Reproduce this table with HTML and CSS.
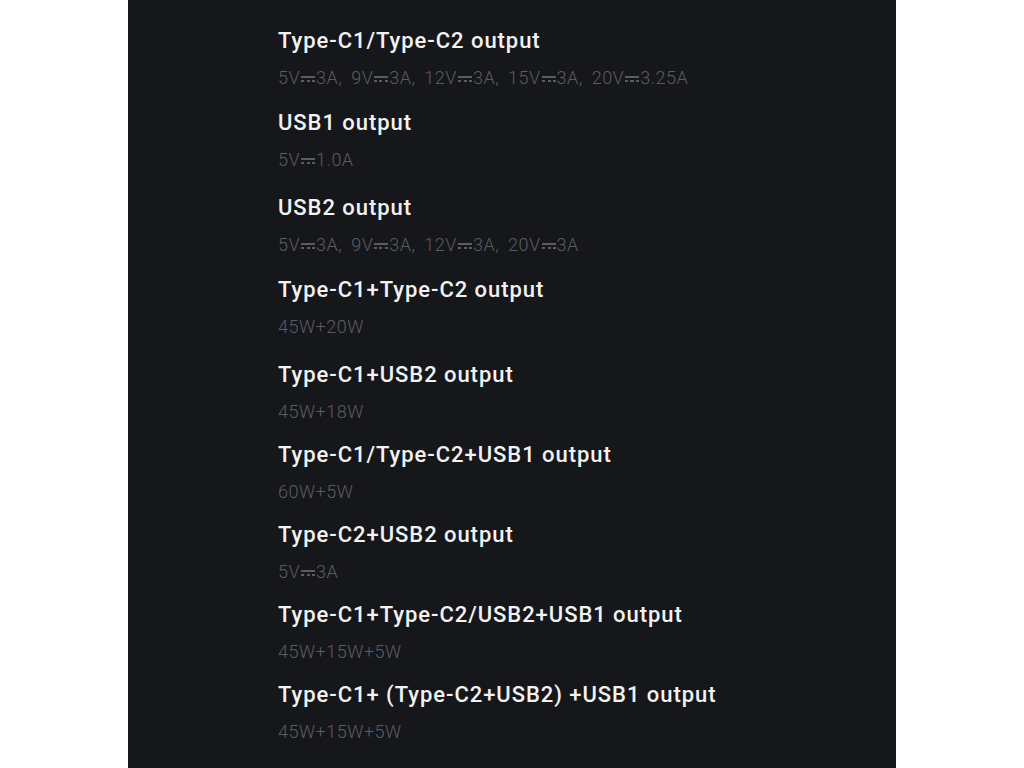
FILE: index.html
```html
<!DOCTYPE html>
<html lang="en">
<head>
<meta charset="utf-8">
<title>Output specifications</title>
<link rel="stylesheet" href="styles.css">
</head>
<body>
<main class="panel">
  <ul class="specs">
    <li class="spec spec--gap2">
      <h3 class="spec__title">Type-C1/Type-C2 output</h3>
      <p class="spec__value">5V<span class="dc"></span>3A, 9V<span class="dc"></span>3A, 12V<span class="dc"></span>3A, 15V<span class="dc"></span>3A, 20V<span class="dc"></span>3.25A</p>
    </li>
    <li class="spec spec--gap5">
      <h3 class="spec__title">USB1 output</h3>
      <p class="spec__value">5V<span class="dc"></span>1.0A</p>
    </li>
    <li class="spec spec--gap2">
      <h3 class="spec__title">USB2 output</h3>
      <p class="spec__value">5V<span class="dc"></span>3A, 9V<span class="dc"></span>3A, 12V<span class="dc"></span>3A, 20V<span class="dc"></span>3A</p>
    </li>
    <li class="spec spec--gap5">
      <h3 class="spec__title">Type-C1+Type-C2 output</h3>
      <p class="spec__value">45W+20W</p>
    </li>
    <li class="spec">
      <h3 class="spec__title">Type-C1+USB2 output</h3>
      <p class="spec__value">45W+18W</p>
    </li>
    <li class="spec">
      <h3 class="spec__title">Type-C1/Type-C2+USB1 output</h3>
      <p class="spec__value">60W+5W</p>
    </li>
    <li class="spec">
      <h3 class="spec__title">Type-C2+USB2 output</h3>
      <p class="spec__value">5V<span class="dc"></span>3A</p>
    </li>
    <li class="spec">
      <h3 class="spec__title">Type-C1+Type-C2/USB2+USB1 output</h3>
      <p class="spec__value">45W+15W+5W</p>
    </li>
    <li class="spec">
      <h3 class="spec__title">Type-C1+ (Type-C2+USB2) +USB1 output</h3>
      <p class="spec__value">45W+15W+5W</p>
    </li>
  </ul>
</main>
</body>
</html>
```
FILE: styles.css
```css
html, body {
  margin: 0;
  padding: 0;
  background: #ffffff;
}

body {
  font-family: Roboto, "Liberation Sans", Arial, sans-serif;
}

.panel {
  width: 768px;
  min-height: 768px;
  margin: 0 auto;
  box-sizing: border-box;
  background: #16171b;
  padding: 27px 0 0 150px;
}

.specs {
  list-style: none;
  margin: 0;
  padding: 0;
}

.spec {
  margin: 0 0 17px;
}

.spec--gap2 {
  margin-bottom: 19px;
}

.spec--gap5 {
  margin-bottom: 22px;
}

.spec__title {
  margin: 0;
  font-size: 22px;
  line-height: 28px;
  font-weight: 500;
  color: #f2f2f2;
  letter-spacing: 0.95px;
}

.spec__value {
  margin: 11px 0 0;
  font-size: 18px;
  line-height: 24px;
  font-weight: 300;
  color: #5b5c60;
  letter-spacing: 0.5px;
  word-spacing: 4px;
}

.dc {
  display: inline-block;
  box-sizing: border-box;
  width: 14px;
  height: 6px;
  margin: 0 1px;
  vertical-align: 2px;
  border-top: 2px solid currentColor;
  background: repeating-linear-gradient(to right, currentColor 0 3px, transparent 3px 5.5px) left bottom / 100% 2px no-repeat;
}
```
